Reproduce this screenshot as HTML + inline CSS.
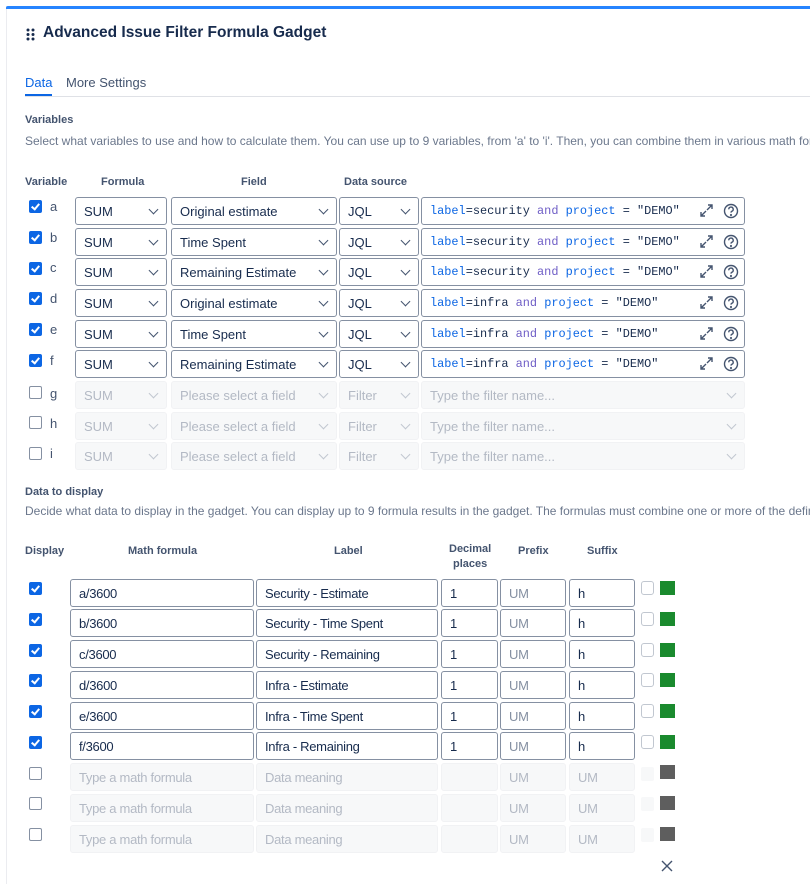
<!DOCTYPE html>
<html><head><meta charset="utf-8"><style>
*{box-sizing:border-box;margin:0;padding:0}
body{width:810px;height:884px;background:#fff;font-family:"Liberation Sans",sans-serif;color:#172b4d;position:relative;overflow:hidden;font-size:13px}
.a{position:absolute}
.bar{left:6px;top:6px;width:804px;height:3px;background:#2684ff;border-radius:2px 0 0 0}
.card{left:6px;top:6px;width:804px;height:878px;border-left:1px solid #ebecf0}
.h{font-weight:bold;font-size:11px;color:#44546f}
.d{font-size:12px;color:#6b778c;white-space:nowrap;width:785px;overflow:hidden}
.in{position:absolute;height:28px;border:1px solid #8590a2;border-radius:3px;background:#fff;padding-left:8px;line-height:27px;font-size:13px;color:#172b4d;white-space:nowrap;overflow:hidden}
.dis{background:#f7f8f9;border-color:#f1f2f4;color:#b3b9c4}
.chev{position:absolute;right:9px;top:8px;width:7px;height:7px;border-right:1.3px solid #44546f;border-bottom:1.3px solid #44546f;transform:rotate(45deg)}
.dis .chev{border-color:#c1c7d0}
.cb{position:absolute;width:13px;height:13px;border-radius:2px;background:#0c66e4}
.cb:after{content:"";position:absolute;left:4px;top:1.5px;width:3px;height:6px;border-right:2px solid #fff;border-bottom:2px solid #fff;transform:rotate(40deg)}
.cbo{position:absolute;width:13px;height:13px;border-radius:2px;border:1.5px solid #8590a2;background:#fff}
.lt{position:absolute;font-size:13px;color:#44546f}
.mono{font-family:"Liberation Mono",monospace;font-size:11.9px}
.k1{color:#0c66e4}.k2{color:#6e5dc6}
.sq{position:absolute;width:15px;height:14px}
.sc{position:absolute;width:13px;height:14px;border:1.5px solid #c1c7d0;border-radius:3px;background:#fff}
.sd{position:absolute;width:13px;height:14px;background:#f7f8f9;border-radius:2px}
.b{font-size:13px;letter-spacing:-0.3px}
</style></head><body>
<div class="a card"></div>
<div class="a bar"></div>
<svg class="a" style="left:26px;top:28px" width="9" height="13"><g fill="#172b4d"><circle cx="2" cy="2" r="1.5"/><circle cx="7" cy="2" r="1.5"/><circle cx="2" cy="6.5" r="1.5"/><circle cx="7" cy="6.5" r="1.5"/><circle cx="2" cy="11" r="1.5"/><circle cx="7" cy="11" r="1.5"/></g></svg>
<div class="a" style="left:43px;top:24px;font-size:15.5px;font-weight:bold;color:#172b4d">Advanced Issue Filter Formula Gadget</div>
<div class="a" style="left:25px;top:75px;font-size:13px;color:#0c66e4">Data</div>
<div class="a" style="left:66px;top:75px;font-size:13px;color:#44546f">More Settings</div>
<div class="a" style="left:25px;top:96px;width:785px;height:1px;background:#dfe1e6"></div>
<div class="a" style="left:25px;top:94px;width:27px;height:2px;background:#0c66e4"></div>
<div class="a h" style="left:25px;top:114px">Variables</div>
<div class="a d" style="left:25px;top:134px">Select what variables to use and how to calculate them. You can use up to 9 variables, from 'a' to 'i'. Then, you can combine them in various math formulas.</div>
<div class="a h" style="left:25px;top:176px">Variable</div>
<div class="a h" style="left:101px;top:176px">Formula</div>
<div class="a h" style="left:241px;top:176px">Field</div>
<div class="a h" style="left:344px;top:176px">Data source</div>

<div class="cb" style="left:29px;top:200px"></div><div class="lt" style="left:50px;top:199px">a</div>
<div class="in" style="left:75px;top:197px;width:92px">SUM<span class="chev"></span></div>
<div class="in" style="left:171px;top:197px;width:166px">Original estimate<span class="chev"></span></div>
<div class="in" style="left:339px;top:197px;width:80px">JQL<span class="chev"></span></div>
<div class="in mono" style="left:421px;top:197px;width:324px"><span class="k1">label</span>=security <span class="k2">and</span> <span class="k1">project</span> = "DEMO"</div>

<div class="cb" style="left:29px;top:231px"></div><div class="lt" style="left:50px;top:230px">b</div>
<div class="in" style="left:75px;top:228px;width:92px">SUM<span class="chev"></span></div>
<div class="in" style="left:171px;top:228px;width:166px">Time Spent<span class="chev"></span></div>
<div class="in" style="left:339px;top:228px;width:80px">JQL<span class="chev"></span></div>
<div class="in mono" style="left:421px;top:228px;width:324px"><span class="k1">label</span>=security <span class="k2">and</span> <span class="k1">project</span> = "DEMO"</div>

<div class="cb" style="left:29px;top:262px"></div><div class="lt" style="left:50px;top:260px">c</div>
<div class="in" style="left:75px;top:258px;width:92px">SUM<span class="chev"></span></div>
<div class="in" style="left:171px;top:258px;width:166px">Remaining Estimate<span class="chev"></span></div>
<div class="in" style="left:339px;top:258px;width:80px">JQL<span class="chev"></span></div>
<div class="in mono" style="left:421px;top:258px;width:324px"><span class="k1">label</span>=security <span class="k2">and</span> <span class="k1">project</span> = "DEMO"</div>

<div class="cb" style="left:29px;top:292px"></div><div class="lt" style="left:50px;top:291px">d</div>
<div class="in" style="left:75px;top:289px;width:92px">SUM<span class="chev"></span></div>
<div class="in" style="left:171px;top:289px;width:166px">Original estimate<span class="chev"></span></div>
<div class="in" style="left:339px;top:289px;width:80px">JQL<span class="chev"></span></div>
<div class="in mono" style="left:421px;top:289px;width:324px"><span class="k1">label</span>=infra <span class="k2">and</span> <span class="k1">project</span> = "DEMO"</div>

<div class="cb" style="left:29px;top:323px"></div><div class="lt" style="left:50px;top:322px">e</div>
<div class="in" style="left:75px;top:320px;width:92px">SUM<span class="chev"></span></div>
<div class="in" style="left:171px;top:320px;width:166px">Time Spent<span class="chev"></span></div>
<div class="in" style="left:339px;top:320px;width:80px">JQL<span class="chev"></span></div>
<div class="in mono" style="left:421px;top:320px;width:324px"><span class="k1">label</span>=infra <span class="k2">and</span> <span class="k1">project</span> = "DEMO"</div>

<div class="cb" style="left:29px;top:354px"></div><div class="lt" style="left:50px;top:353px">f</div>
<div class="in" style="left:75px;top:350px;width:92px">SUM<span class="chev"></span></div>
<div class="in" style="left:171px;top:350px;width:166px">Remaining Estimate<span class="chev"></span></div>
<div class="in" style="left:339px;top:350px;width:80px">JQL<span class="chev"></span></div>
<div class="in mono" style="left:421px;top:350px;width:324px"><span class="k1">label</span>=infra <span class="k2">and</span> <span class="k1">project</span> = "DEMO"</div>

<svg class="a" style="left:698px;top:0" width="44" height="380" fill="none" stroke="#44546f" stroke-width="1.4">
<g id="ic"><path d="M3 216l5-5M3 212v4h4M14 205l-5 5M14 209v-4h-4"/><circle cx="33" cy="211" r="6.5"/><path d="M30.8 209.3a2.2 2.2 0 1 1 3 2c-.7.3-.8.7-.8 1.3"/><circle cx="33" cy="215" r=".4"/></g>
<use href="#ic" y="31"/><use href="#ic" y="61"/><use href="#ic" y="92"/><use href="#ic" y="123"/><use href="#ic" y="153"/>
</svg>

<div class="cbo" style="left:29px;top:386px"></div><div class="lt" style="left:50px;top:386px">g</div>
<div class="in dis" style="left:75px;top:381px;width:92px">SUM<span class="chev"></span></div>
<div class="in dis" style="left:171px;top:381px;width:166px">Please select a field<span class="chev"></span></div>
<div class="in dis" style="left:339px;top:381px;width:80px">Filter<span class="chev"></span></div>
<div class="in dis" style="left:421px;top:381px;width:324px">Type the filter name...<span class="chev"></span></div>

<div class="cbo" style="left:29px;top:416px"></div><div class="lt" style="left:50px;top:416px">h</div>
<div class="in dis" style="left:75px;top:412px;width:92px">SUM<span class="chev"></span></div>
<div class="in dis" style="left:171px;top:412px;width:166px">Please select a field<span class="chev"></span></div>
<div class="in dis" style="left:339px;top:412px;width:80px">Filter<span class="chev"></span></div>
<div class="in dis" style="left:421px;top:412px;width:324px">Type the filter name...<span class="chev"></span></div>

<div class="cbo" style="left:29px;top:447px"></div><div class="lt" style="left:50px;top:446px">i</div>
<div class="in dis" style="left:75px;top:442px;width:92px">SUM<span class="chev"></span></div>
<div class="in dis" style="left:171px;top:442px;width:166px">Please select a field<span class="chev"></span></div>
<div class="in dis" style="left:339px;top:442px;width:80px">Filter<span class="chev"></span></div>
<div class="in dis" style="left:421px;top:442px;width:324px">Type the filter name...<span class="chev"></span></div>

<div class="a h" style="left:25px;top:486px">Data to display</div>
<div class="a d" style="left:25px;top:504px">Decide what data to display in the gadget. You can display up to 9 formula results in the gadget. The formulas must combine one or more of the defined variables.</div>
<div class="a h" style="left:25px;top:545px">Display</div>
<div class="a h" style="left:128px;top:545px">Math formula</div>
<div class="a h" style="left:334px;top:545px">Label</div>
<div class="a h" style="left:449px;top:542px;text-align:center;line-height:15px">Decimal<br>places</div>
<div class="a h" style="left:518px;top:545px">Prefix</div>
<div class="a h" style="left:587px;top:545px">Suffix</div>

<div class="cb" style="left:29px;top:582px"></div>
<div class="in b" style="left:70px;top:579px;width:184px">a/3600</div><div class="in b" style="left:256px;top:579px;width:182px">Security - Estimate</div><div class="in b" style="left:441px;top:579px;width:57px">1</div><div class="in b" style="left:500px;top:579px;width:66px;color:#8590a2">UM</div><div class="in b" style="left:569px;top:579px;width:66px">h</div><div class="sc" style="left:641px;top:581px"></div><div class="sq" style="left:660px;top:581px;background:#1a8a2e"></div>

<div class="cb" style="left:29px;top:613px"></div>
<div class="in b" style="left:70px;top:609px;width:184px">b/3600</div><div class="in b" style="left:256px;top:609px;width:182px">Security - Time Spent</div><div class="in b" style="left:441px;top:609px;width:57px">1</div><div class="in b" style="left:500px;top:609px;width:66px;color:#8590a2">UM</div><div class="in b" style="left:569px;top:609px;width:66px">h</div><div class="sc" style="left:641px;top:612px"></div><div class="sq" style="left:660px;top:612px;background:#1a8a2e"></div>

<div class="cb" style="left:29px;top:644px"></div>
<div class="in b" style="left:70px;top:640px;width:184px">c/3600</div><div class="in b" style="left:256px;top:640px;width:182px">Security - Remaining</div><div class="in b" style="left:441px;top:640px;width:57px">1</div><div class="in b" style="left:500px;top:640px;width:66px;color:#8590a2">UM</div><div class="in b" style="left:569px;top:640px;width:66px">h</div><div class="sc" style="left:641px;top:643px"></div><div class="sq" style="left:660px;top:643px;background:#1a8a2e"></div>

<div class="cb" style="left:29px;top:674px"></div>
<div class="in b" style="left:70px;top:671px;width:184px">d/3600</div><div class="in b" style="left:256px;top:671px;width:182px">Infra - Estimate</div><div class="in b" style="left:441px;top:671px;width:57px">1</div><div class="in b" style="left:500px;top:671px;width:66px;color:#8590a2">UM</div><div class="in b" style="left:569px;top:671px;width:66px">h</div><div class="sc" style="left:641px;top:673px"></div><div class="sq" style="left:660px;top:673px;background:#1a8a2e"></div>

<div class="cb" style="left:29px;top:705px"></div>
<div class="in b" style="left:70px;top:702px;width:184px">e/3600</div><div class="in b" style="left:256px;top:702px;width:182px">Infra - Time Spent</div><div class="in b" style="left:441px;top:702px;width:57px">1</div><div class="in b" style="left:500px;top:702px;width:66px;color:#8590a2">UM</div><div class="in b" style="left:569px;top:702px;width:66px">h</div><div class="sc" style="left:641px;top:704px"></div><div class="sq" style="left:660px;top:704px;background:#1a8a2e"></div>

<div class="cb" style="left:29px;top:736px"></div>
<div class="in b" style="left:70px;top:732px;width:184px">f/3600</div><div class="in b" style="left:256px;top:732px;width:182px">Infra - Remaining</div><div class="in b" style="left:441px;top:732px;width:57px">1</div><div class="in b" style="left:500px;top:732px;width:66px;color:#8590a2">UM</div><div class="in b" style="left:569px;top:732px;width:66px">h</div><div class="sc" style="left:641px;top:735px"></div><div class="sq" style="left:660px;top:735px;background:#1a8a2e"></div>

<div class="cbo" style="left:29px;top:767px"></div>
<div class="in b dis" style="left:70px;top:763px;width:184px">Type a math formula</div><div class="in b dis" style="left:256px;top:763px;width:182px">Data meaning</div><div class="in b dis" style="left:441px;top:763px;width:57px"></div><div class="in b dis" style="left:500px;top:763px;width:66px">UM</div><div class="in b dis" style="left:569px;top:763px;width:66px">UM</div><div class="sd" style="left:641px;top:767px"></div><div class="sq" style="left:660px;top:765px;background:#5e5e5e"></div>

<div class="cbo" style="left:29px;top:797px"></div>
<div class="in b dis" style="left:70px;top:794px;width:184px">Type a math formula</div><div class="in b dis" style="left:256px;top:794px;width:182px">Data meaning</div><div class="in b dis" style="left:441px;top:794px;width:57px"></div><div class="in b dis" style="left:500px;top:794px;width:66px">UM</div><div class="in b dis" style="left:569px;top:794px;width:66px">UM</div><div class="sd" style="left:641px;top:797px"></div><div class="sq" style="left:660px;top:796px;background:#5e5e5e"></div>

<div class="cbo" style="left:29px;top:828px"></div>
<div class="in b dis" style="left:70px;top:825px;width:184px">Type a math formula</div><div class="in b dis" style="left:256px;top:825px;width:182px">Data meaning</div><div class="in b dis" style="left:441px;top:825px;width:57px"></div><div class="in b dis" style="left:500px;top:825px;width:66px">UM</div><div class="in b dis" style="left:569px;top:825px;width:66px">UM</div><div class="sd" style="left:641px;top:828px"></div><div class="sq" style="left:660px;top:827px;background:#5e5e5e"></div>

<svg class="a" style="left:661px;top:860px" width="12" height="12" stroke="#44546f" stroke-width="1.4"><path d="M1 1l10 10M11 1L1 11"/></svg>
</body></html>
